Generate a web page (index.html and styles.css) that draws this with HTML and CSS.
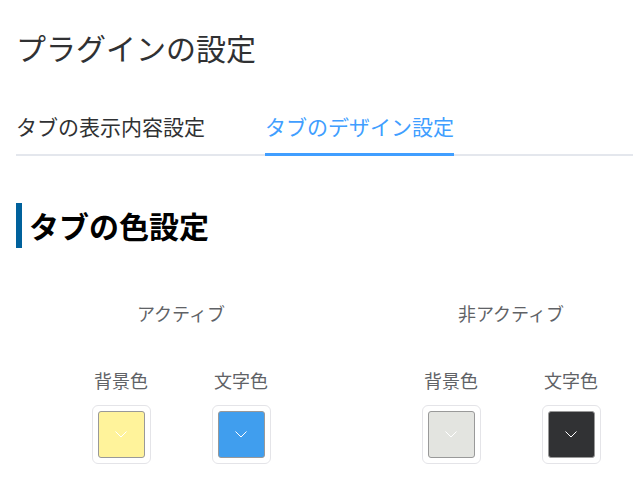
FILE: index.html
```html
<!DOCTYPE html>
<html lang="ja">
<head>
<meta charset="utf-8">
<title>プラグインの設定</title>
<link rel="stylesheet" href="styles.css">
</head>
<body>
<div class="page">
  <h1 class="page-title">プラグインの設定</h1>
  <div class="tabs">
    <div class="tab"><span class="tab-label">タブの表示内容設定</span></div>
    <div class="tab is-active"><span class="tab-label">タブのデザイン設定</span></div>
  </div>
  <h2 class="section-title">タブの色設定</h2>
  <div class="color-groups">
    <div class="color-group">
      <div class="group-label">アクティブ</div>
      <div class="group-items">
        <div class="color-item">
          <div class="item-label">背景色</div>
          <div class="picker"><div class="swatch swatch-yellow"><svg class="chev" width="12" height="7" viewBox="0 0 12 7"><polyline points="0.5,0.5 6,6 11.5,0.5" fill="none" stroke="#ffffff" stroke-width="1"/></svg></div></div>
        </div>
        <div class="color-item">
          <div class="item-label">文字色</div>
          <div class="picker"><div class="swatch swatch-blue"><svg class="chev" width="12" height="7" viewBox="0 0 12 7"><polyline points="0.5,0.5 6,6 11.5,0.5" fill="none" stroke="#ffffff" stroke-width="1"/></svg></div></div>
        </div>
      </div>
    </div>
    <div class="color-group">
      <div class="group-label">非アクティブ</div>
      <div class="group-items">
        <div class="color-item">
          <div class="item-label">背景色</div>
          <div class="picker"><div class="swatch swatch-gray"><svg class="chev" width="12" height="7" viewBox="0 0 12 7"><polyline points="0.5,0.5 6,6 11.5,0.5" fill="none" stroke="#ffffff" stroke-width="1"/></svg></div></div>
        </div>
        <div class="color-item">
          <div class="item-label">文字色</div>
          <div class="picker"><div class="swatch swatch-dark"><svg class="chev" width="12" height="7" viewBox="0 0 12 7"><polyline points="0.5,0.5 6,6 11.5,0.5" fill="none" stroke="#ffffff" stroke-width="1"/></svg></div></div>
        </div>
      </div>
    </div>
  </div>
</div>
</body>
</html>
```

FILE: styles.css
```css
html, body {
  margin: 0;
  padding: 0;
  background: #ffffff;
}
body {
  font-family: "Noto Sans CJK JP", "Noto Sans", sans-serif;
  color: #303133;
}
.page {
  padding: 27px 0 0 16px;
}
.page-title {
  margin: 0;
  font-size: 30px;
  font-weight: 400;
  line-height: 40px;
  color: #303133;
}
.tabs {
  display: flex;
  gap: 60px;
  margin-top: 29px;
  height: 60px;
  box-shadow: inset 0 -2px 0 #e4e7ed;
}
.tab {
  height: 60px;
}
.tab-label {
  display: block;
  box-sizing: border-box;
  height: 60px;
  padding-top: 3px;
  line-height: 54px;
  font-size: 21px;
  color: #303133;
  border-bottom: 3px solid transparent;
}
.tab.is-active .tab-label {
  color: #409eff;
  border-bottom-color: #409eff;
}
.section-title {
  margin: 47px 0 0 0;
  border-left: 6px solid #00619c;
  padding-left: 7px;
  font-size: 30px;
  font-weight: 700;
  line-height: 45px;
  color: #000000;
}
.color-groups {
  display: flex;
  gap: 90px;
  padding-left: 45px;
  margin-top: 52px;
}
.color-group {
  width: 240px;
  display: flex;
  flex-direction: column;
  align-items: center;
}
.group-label {
  font-size: 18px;
  line-height: 27px;
  color: #606266;
}
.group-items {
  display: flex;
  margin-top: 40px;
}
.color-item {
  width: 120px;
  display: flex;
  flex-direction: column;
  align-items: center;
}
.item-label {
  font-size: 18px;
  line-height: 27px;
  color: #606266;
}
.picker {
  margin-top: 11px;
  box-sizing: border-box;
  width: 59px;
  height: 59px;
  padding: 5px;
  border: 1px solid #e4e4e8;
  border-radius: 6px;
}
.swatch {
  box-sizing: border-box;
  width: 47px;
  height: 47px;
  border: 1px solid #999999;
  border-radius: 3px;
  display: flex;
  align-items: center;
  justify-content: center;
}
.chev {
  display: block;
}
.swatch-yellow { background: #fff39b; }
.swatch-blue { background: #409eee; }
.swatch-gray { background: #e3e4e0; }
.swatch-dark { background: #313234; }
```
